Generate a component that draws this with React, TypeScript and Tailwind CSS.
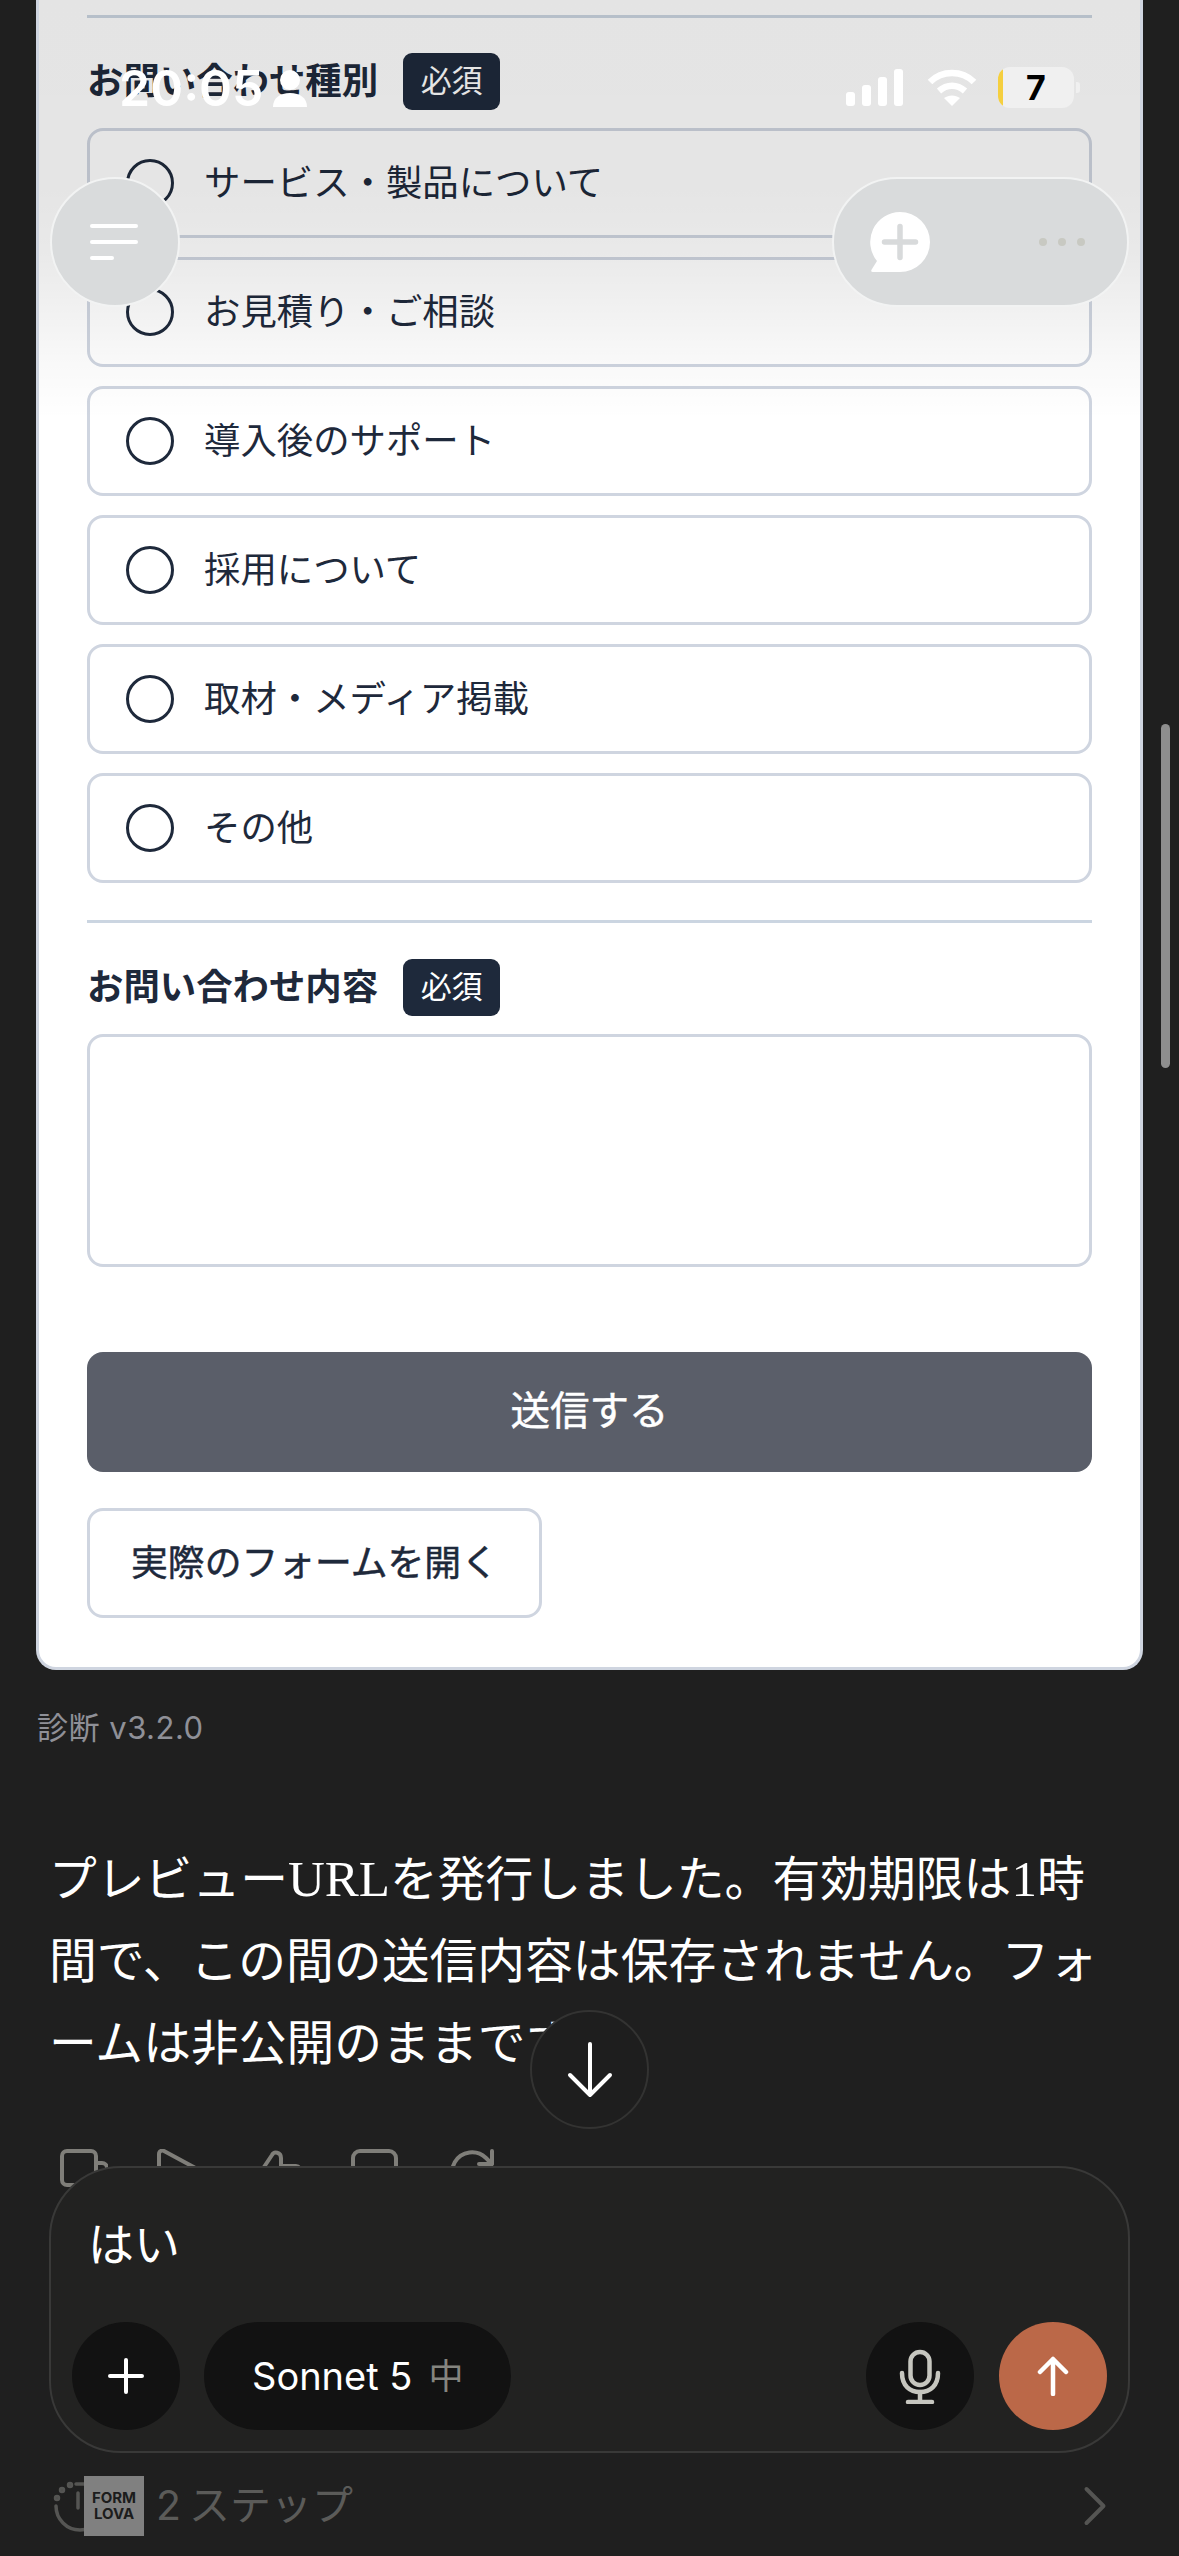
import React from "react";
import { ChevronRight } from "lucide-react";

const OPTIONS = [
  "サービス・製品について",
  "お見積り・ご相談",
  "導入後のサポート",
  "採用について",
  "取材・メディア掲載",
  "その他",
];

function FieldLabel({ text }: { text: string }) {
  return (
    <div className="flex items-center gap-[25px]">
      <span className="text-[36.4px] leading-[57px] font-bold text-[#1e293b]">{text}</span>
      <span className="flex h-[57px] w-[97px] items-center justify-center rounded-[9px] bg-[#1e293b] text-[31px] text-white">
        必須
      </span>
    </div>
  );
}

function StatusBar() {
  return (
    <div className="absolute left-0 top-0 h-[120px] w-full">
      <span className="absolute left-[119px] top-[58px] text-[50px] leading-[60px] font-semibold text-white">20:05</span>
      <svg className="absolute left-[273px] top-[70px]" width="34" height="37" viewBox="0 0 34 37" fill="white">
        <circle cx="17" cy="10" r="10" />
        <path d="M0 37c0-9 7-14 17-14s17 5 17 14z" />
      </svg>
      <div className="absolute left-[846px] top-[69px] flex h-[37px] items-end gap-[7px]">
        <span className="h-[14px] w-[9px] rounded-[3px] bg-white" />
        <span className="h-[21px] w-[9px] rounded-[3px] bg-white" />
        <span className="h-[29px] w-[9px] rounded-[3px] bg-white" />
        <span className="h-[37px] w-[9px] rounded-[3px] bg-white" />
      </div>
      <svg className="absolute left-[927px] top-[69px]" width="50" height="38" viewBox="0 0 50 38" fill="none" stroke="white" strokeWidth="6.5">
        <path d="M3 13C15 1 35 1 47 13" />
        <path d="M12 22c8-7 18-7 26 0" />
        <path d="M25 37l-8-8c5-3.500 11-3.500 16 0z" fill="white" stroke="none" />
      </svg>
      <div className="absolute left-[998px] top-[67px] flex h-[41px] w-[76px] items-center justify-center overflow-hidden rounded-[12px] bg-[#f0f0f0]">
        <span className="absolute left-0 top-0 h-full w-[5px] bg-[#f5cf3f]" />
        <span className="text-[34px] font-bold leading-none text-black">7</span>
      </div>
      <span className="absolute left-[1076px] top-[82px] h-[11px] w-[4px] rounded-r-[3px] bg-[#f0f0f0]" />
    </div>
  );
}

function FloatingControls() {
  return (
    <>
      <div className="absolute left-[50px] top-[177px] flex h-[130px] w-[130px] flex-col justify-center gap-[12px] rounded-full border-2 border-[#f2f3f3] bg-[#d9dbdc] pl-[38px]">
        <span className="h-[4px] w-[48px] rounded-full bg-white" />
        <span className="h-[4px] w-[48px] rounded-full bg-white" />
        <span className="h-[4px] w-[24px] rounded-full bg-white" />
      </div>
      <div className="absolute left-[832px] top-[177px] flex h-[130px] w-[297px] items-center justify-between rounded-full border-2 border-[#f2f3f3] bg-[#d9dbdc] pl-[36px] pr-[42px]">
        <svg width="60" height="60" viewBox="0 0 60 60">
          <path d="M30 0A30 30 0 0 1 30 60H3Q0 60 2 57L7 49A30 30 0 0 1 30 0Z" fill="white" />
          <path d="M30 14.500V45.500M14.500 30H45.500" stroke="#d8dadb" strokeWidth="5.500" strokeLinecap="round" />
        </svg>
        <div className="flex gap-[11px]">
          <span className="h-[8px] w-[8px] rounded-full bg-[#c8c9c2]" />
          <span className="h-[8px] w-[8px] rounded-full bg-[#c8c9c2]" />
          <span className="h-[8px] w-[8px] rounded-full bg-[#c8c9c2]" />
        </div>
      </div>
    </>
  );
}

function ActionIcons() {
  const stroke = { fill: "none", stroke: "#7f7e79", strokeWidth: 4, strokeLinecap: "round" as const, strokeLinejoin: "round" as const };
  return (
    <div className="mt-[64px] ml-[60px] flex gap-[49px]">
      <svg width="48" height="48" viewBox="0 0 48 48" {...stroke}>
        <rect x="2" y="2" width="34" height="34" rx="5" />
        <path d="M36 14h6a5 5 0 0 1 5 5v24" />
      </svg>
      <svg width="48" height="48" viewBox="0 0 48 48" {...stroke}>
        <path d="M2 5c0-3 3-4 5-3l37 20c2 1 2 3 0 4L7 46c-2 1-5 0-5-3z" />
      </svg>
      <svg width="48" height="48" viewBox="0 0 48 48" {...stroke}>
        <path d="M6 24L18 6c2-4 9-3 9 3v8h15c3 0 5 3 4 6l-5 20H6z" />
      </svg>
      <svg width="48" height="48" viewBox="0 0 48 48" {...stroke}>
        <rect x="2" y="2" width="43" height="44" rx="7" />
      </svg>
      <svg width="48" height="48" viewBox="0 0 48 48" {...stroke}>
        <path d="M44 24A20 20 0 1 1 38 9l6 6M44 2v13H31" />
      </svg>
    </div>
  );
}

function Composer() {
  return (
    <div className="mx-[49px] flex h-[287px] flex-col justify-between rounded-[72px] border-2 border-[#393938] bg-[#222221] pl-[21px] pr-[21px] pb-[21px]">
      <span className="pl-[16px] pt-[46px] text-[46px] leading-[60px] text-white">はい</span>
      <div className="flex items-center">
        <div className="flex h-[108px] w-[108px] items-center justify-center rounded-full bg-[#121212]">
          <svg width="36" height="36" viewBox="0 0 36 36" fill="none" stroke="white" strokeWidth="4" strokeLinecap="round">
            <path d="M18 2v32M2 18h32" />
          </svg>
        </div>
        <div className="ml-[24px] flex h-[108px] w-[307px] items-center rounded-full bg-[#121212] pl-[48px]">
          <span className="text-[38px] text-white">Sonnet 5</span>
          <span className="ml-[16px] text-[35px] text-[#85857f]">中</span>
        </div>
        <div className="ml-auto flex h-[108px] w-[108px] items-center justify-center rounded-full bg-[#121212]">
          <svg width="44" height="56" viewBox="0 0 44 56" fill="none" stroke="#c6c6bf" strokeWidth="4.500" strokeLinecap="round">
            <rect x="12.500" y="4" width="19" height="33" rx="9.500" />
            <path d="M4 25c0 13 8 19 18 19s18-6 18-19" />
            <path d="M22 44v10M10 54h24" />
          </svg>
        </div>
        <div className="ml-[25px] flex h-[108px] w-[108px] items-center justify-center rounded-full bg-[#bb6848]">
          <svg width="32" height="40" viewBox="0 0 32 40" fill="none" stroke="white" strokeWidth="4.500" strokeLinecap="round" strokeLinejoin="round">
            <path d="M16 3v35M3 16L16 3l13 13" />
          </svg>
        </div>
      </div>
    </div>
  );
}

function StepRow() {
  return (
    <div className="relative flex h-[103px] items-center pl-[50px] pr-[50px] pt-[2px]">
      <svg width="60" height="60" viewBox="0 0 60 60" fill="none" stroke="#555553" strokeWidth="3.500" strokeLinecap="round">
        <path d="M6 30a24 24 0 0 0 48 0" />
        <path d="M26 8h8M28 17v15" />
        <circle cx="7" cy="22" r="1.500" />
        <circle cx="12" cy="14" r="1.500" />
        <circle cx="20" cy="9" r="1.500" />
      </svg>
      <div className="-ml-[26px] flex h-[60px] w-[60px] flex-col items-center justify-center bg-[#808080] text-[15px] leading-[16px] font-bold text-[#1c1c1c]">
        <span>FORM</span>
        <span>LOVA</span>
      </div>
      <span className="ml-[12px] text-[41px] text-[#5b5b59]">
        <span className="mr-[8px]">2</span>ステップ
      </span>
      <ChevronRight className="ml-auto" size={68} color="#555553" strokeWidth={1.4} />
    </div>
  );
}

export default function App() {
  return (
    <div className="relative h-[2556px] w-[1179px] overflow-hidden bg-[#1f1f1f] font-['Inter','Noto_Sans_CJK_JP',sans-serif]">
      <div className="relative mx-[36px] rounded-b-[20px] border-x-[3px] border-b-[3px] border-[#cfd5e0] bg-white px-[48px] pt-[15px] pb-[49px]">
        <div className="h-[3px] bg-[#cbd5e1]" />
        <div className="mt-[35px]">
          <FieldLabel text="お問い合わせ種別" />
        </div>
        <div className="mt-[18px] flex flex-col gap-[19px]">
          {OPTIONS.map((option) => (
            <div key={option} className="flex h-[110px] items-center gap-[30px] rounded-[16px] border-[3px] border-[#cfd5e0] pl-[36px]">
              <span className="h-[48px] w-[48px] rounded-full border-[3px] border-[#1e293b]" />
              <span className="text-[36.4px] text-[#1e293b]">{option}</span>
            </div>
          ))}
        </div>
        <div className="mt-[37px] h-[3px] bg-[#cbd5e1]" />
        <div className="mt-[36px]">
          <FieldLabel text="お問い合わせ内容" />
        </div>
        <div className="mt-[18px] h-[233px] rounded-[16px] border-[3px] border-[#cfd5e0]" />
        <div className="mt-[85px] flex h-[120px] items-center justify-center rounded-[16px] bg-[#5a5e69] text-[39.5px] text-white [-webkit-text-stroke:0.5px_white]">
          送信する
        </div>
        <div className="mt-[36px] flex h-[110px] w-[455px] items-center justify-center rounded-[16px] border-[3px] border-[#cfd5e0] text-[36.8px] text-[#1e293b] [-webkit-text-stroke:0.5px_#1e293b]">
          実際のフォームを開く
        </div>
        {/* 上部のぼかし */}
        <div className="pointer-events-none absolute inset-x-0 top-0 h-[420px] bg-[linear-gradient(to_bottom,rgba(0,0,0,0.105)_0%,rgba(0,0,0,0.1)_45%,rgba(0,0,0,0.085)_60%,rgba(0,0,0,0.06)_72%,rgba(0,0,0,0.022)_87%,rgba(0,0,0,0)_100%)]" />
      </div>

      <div className="mt-[38px] ml-[37px] text-[31px] leading-[40px] tracking-[0.5px] text-[#8f9097]">診断 v3.2.0</div>

      <div className="mt-[90px] ml-[49px] font-['Liberation_Serif','Noto_Sans_CJK_JP',sans-serif] text-[47.8px] leading-[82px] text-white">
        <p className="whitespace-nowrap">
          プレビュー<span className="text-[51px]">URL</span>を発行しました。有効期限は<span className="text-[51px]">1</span>時
        </p>
        <p className="whitespace-nowrap">間で、この間の送信内容は保存されません。フォ</p>
        <p className="whitespace-nowrap">ームは非公開のままです。</p>
      </div>

      <ActionIcons />

      <div className="absolute left-[530px] top-[2010px] flex h-[119px] w-[119px] items-center justify-center rounded-full border-2 border-[#333332] bg-[#1e1e1e]">
        <svg width="46" height="56" viewBox="0 0 46 56" fill="none" stroke="white" strokeWidth="4" strokeLinecap="round" strokeLinejoin="round">
          <path d="M23 2v51M3 33l20 20 20-20" />
        </svg>
      </div>

      <div className="absolute inset-x-0 bottom-0">
        <Composer />
        <StepRow />
      </div>

      <StatusBar />
      <FloatingControls />
      <div className="absolute left-[1161px] top-[724px] h-[344px] w-[9px] rounded-full bg-[#8e8e8e]" />
    </div>
  );
}
